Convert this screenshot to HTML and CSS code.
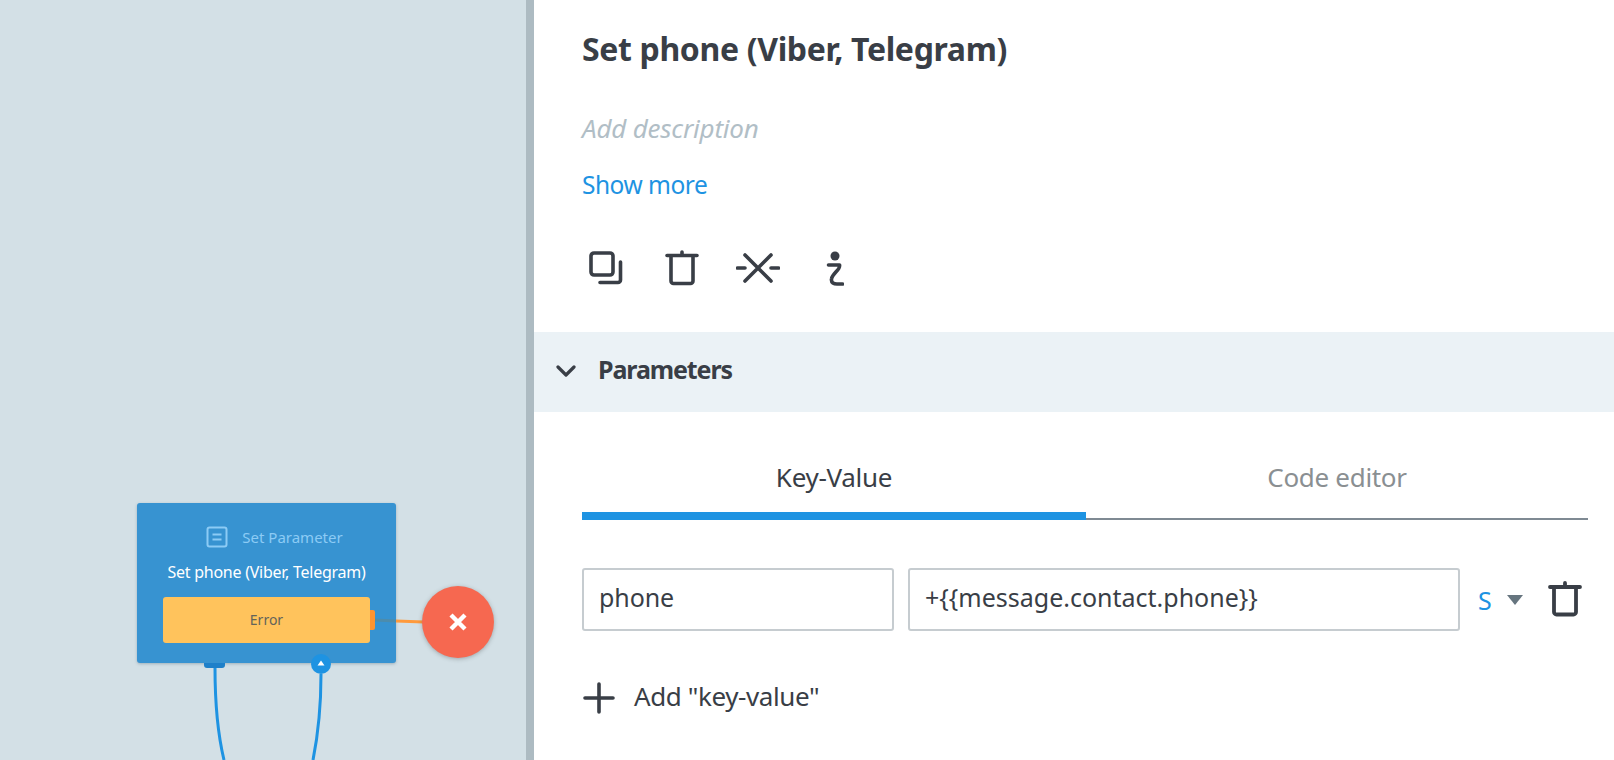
FILE: index.html
```html
<!DOCTYPE html>
<html lang="en">
<head>
<meta charset="utf-8">
<title>Set phone (Viber, Telegram)</title>
<link rel="stylesheet" href="styles.css">
</head>
<body>
<div class="app">
  <div class="canvas">
    <div class="node">
      <div class="node-type">
        <svg width="22" height="22" viewBox="0 0 22 22" fill="none" stroke="#8ccbf5" stroke-width="2"><rect x="1.500" y="1.500" width="19" height="19" rx="2"/><path d="M6.500 8.500h9M6.500 13.500h9"/></svg>
        <span>Set Parameter</span>
      </div>
      <div class="node-title">Set phone (Viber, Telegram)</div>
      <div class="node-error">Error<span class="port-orange"></span></div>
      <span class="port-square"></span>
      <span class="port-round"><svg width="8" height="6" viewBox="0 0 8 6"><path d="M4 0.500L7.500 5.500H.5z" fill="#fff"/></svg></span>
    </div>
    <svg class="wires" width="526" height="760" viewBox="0 0 526 760">
      <path d="M215 668C215 705 218 735 224 760" class="wire"/>
      <path d="M321 674C321 705 318 735 313 760" class="wire"/>
      <path d="M396 621L424 622" class="wire-orange"/>
      <path d="M375 620L396 621" class="wire-shade"/>
    </svg>
    <div class="fail-circle">
      <svg width="20" height="20" viewBox="0 0 20 20"><path d="M3 3L17 17M17 3L3 17" stroke="#fff" stroke-width="4.400"/></svg>
    </div>
  </div>
  <div class="splitter"></div>
  <main class="panel">
    <div class="head">
      <h1 class="title">Set phone (Viber, Telegram)</h1>
      <div class="desc">Add description</div>
      <a class="more">Show more</a>
      <div class="tools">
        <svg class="tool-copy" width="34" height="34" viewBox="0 0 34 34" fill="none" stroke="#393e46" stroke-width="3.600" stroke-linecap="round" stroke-linejoin="round"><rect x="2" y="2" width="22" height="22" rx="3"/><path d="M31.500 11V29a2.500 2.500 0 0 1-2.500 2.500H11"/></svg>
        <svg class="tool-trash" width="34" height="36" viewBox="0 0 34 36" fill="none" stroke="#393e46" stroke-width="3.600" stroke-linecap="round" stroke-linejoin="round"><path d="M2 5.500H32M17 2V5.500M6 6V31a2.500 2.500 0 0 0 2.500 2.500h17A2.500 2.500 0 0 0 28 31V6"/></svg>
        <svg class="tool-cut" width="44" height="32" viewBox="0 0 44 32" fill="none" stroke="#393e46" stroke-width="3.600" stroke-linecap="round"><path d="M9 3L35 29M35 3L9 29M1.500 16H9M35 16H42.500"/></svg>
        <svg class="tool-info" width="18" height="36" viewBox="0 0 18 36" fill="none" stroke="#393e46" stroke-width="3.600" stroke-linecap="round" stroke-linejoin="round"><circle cx="9" cy="6" r="4.500" fill="#393e46" stroke="none"/><path d="M2.500 15H13.500C15 19 6 24 5.500 29C5 33 8 34 11 34H16.500"/></svg>
      </div>
    </div>
    <div class="section">
      <svg class="section-chevron" width="20" height="12" viewBox="0 0 20 12" fill="none" stroke="#393e46" stroke-width="3.200" stroke-linecap="round" stroke-linejoin="round"><path d="M2 2L10 10L18 2"/></svg>
      <span class="section-label">Parameters</span>
    </div>
    <div class="body">
      <div class="tabs">
        <div class="tab tab-active">Key-Value</div>
        <div class="tab">Code editor</div>
      </div>
      <div class="row">
        <div class="field field-key">phone</div>
        <div class="field field-value">+{{message.contact.phone}}</div>
        <span class="type">S</span>
        <span class="caret"></span>
        <svg class="row-trash" width="34" height="36" viewBox="0 0 34 36" fill="none" stroke="#393e46" stroke-width="3.800" stroke-linecap="round" stroke-linejoin="round"><path d="M2 6H32M17 2V6M6 6V31a2.500 2.500 0 0 0 2.500 2.500h17A2.500 2.500 0 0 0 28 31V6"/></svg>
      </div>
      <div class="add">
        <svg class="add-icon" width="32" height="32" viewBox="0 0 32 32" fill="none" stroke="#393e46" stroke-width="3.600" stroke-linecap="round"><path d="M16 2V30M2 16H30"/></svg>
        <span class="add-label">Add "key-value"</span>
      </div>
    </div>
  </main>
</div>
</body>
</html>
```
FILE: styles.css
```css
* { box-sizing: border-box; }
html, body { margin: 0; height: 100%; overflow: hidden; }
body { font-family: "Noto Sans", "Open Sans", sans-serif; color: #393e46; background: #fff; }
.app { display: flex; width: 1614px; height: 760px; }

.canvas { position: relative; width: 526px; flex: none; background: #d3e0e6; overflow: hidden; }
.wires { position: absolute; left: 0; top: 0; }
.wire { fill: none; stroke: #1e93e2; stroke-width: 3; }
.wire-orange { fill: none; stroke: #ff9a3c; stroke-width: 3; }
.wire-shade { fill: none; stroke: #4c8cad; stroke-width: 3; }

.node { position: absolute; left: 137px; top: 503px; width: 259px; height: 160px; background: #3793d1; border-radius: 3px; box-shadow: 0 1px 3px rgba(60,90,110,.35); }
.node-type { display: flex; justify-content: center; align-items: center; gap: 14px; height: 22px; margin-top: 23px; padding-left: 16px; color: #8ccbf5; font-size: 15px; }
.node-title { margin-top: 13px; text-align: center; color: #fff; font-size: 16px; line-height: 22px; letter-spacing: -0.25px; white-space: nowrap; }
.node-error { position: relative; margin: 14px 26px 0; height: 46px; line-height: 45px; background: #ffc35c; border-radius: 3px; text-align: center; color: #63635a; font-size: 14px; }
.port-orange { position: absolute; left: 100%; top: 13px; width: 5px; height: 20px; background: #ff9430; border-radius: 0 2px 2px 0; }
.port-square { position: absolute; left: 67px; top: 100%; width: 21px; height: 5px; background: #1e80c9; border-radius: 0 0 3px 3px; }
.port-round { position: absolute; left: 174px; top: 151px; width: 20px; height: 20px; border-radius: 50%; background: #1e93e2; display: flex; align-items: center; justify-content: center; padding-bottom: 3px; }

.fail-circle { position: absolute; left: 422px; top: 586px; width: 72px; height: 72px; border-radius: 50%; background: #f66850; box-shadow: 0 1px 4px rgba(60,60,60,.35); display: flex; align-items: center; justify-content: center; }

.splitter { width: 8px; flex: none; background: #adbbc2; }

.panel { flex: 1; min-width: 0; display: flex; flex-direction: column; background: #fff; }
.head { height: 332px; padding: 27px 0 0 48px; display: flex; flex-direction: column; align-items: flex-start; }
.title { margin: 0; font-size: 32px; line-height: 44px; font-weight: 700; letter-spacing: -0.35px; }
.desc { margin-top: 40px; font-size: 26px; line-height: 34px; font-style: italic; color: #b1bec6; letter-spacing: -0.2px; }
.more { margin-top: 23px; font-size: 24.500px; line-height: 34px; color: #1e93e2; letter-spacing: -0.5px; }
.tools { display: flex; align-items: center; margin-top: 47px; padding-left: 7px; height: 38px; }
.tool-trash { margin-left: 42px; }
.tool-cut { margin-left: 37px; }
.tool-info { margin-left: 46px; }

.section { height: 80px; flex: none; background: #ebf2f6; display: flex; align-items: center; padding-left: 22px; gap: 22px; font-size: 25px; font-weight: 700; letter-spacing: -1.1px; }
.section-chevron { margin-bottom: 2px; }
.section-label { margin-bottom: 6px; }

.body { padding: 0 26px 0 48px; }
.tabs { display: flex; height: 108px; padding-top: 43px; border-bottom: 2px solid #7f8a93; }
.tab { flex: 1 1 50%; text-align: center; font-size: 26px; line-height: 44px; height: 65px; color: #8a8f92; letter-spacing: -0.3px; }
.tab-active { flex: 0 0 504px; color: #393e46; border-bottom: 8px solid #1e93e2; }

.row { display: flex; align-items: center; margin-top: 48px; }
.field { height: 63px; border: 2px solid #c6ccd0; border-radius: 3px; padding-left: 15px; font-size: 25px; line-height: 54px; letter-spacing: -0.1px; white-space: nowrap; }
.field-key { width: 312px; }
.field-value { width: 552px; margin-left: 14px; letter-spacing: 0; }
.type { margin-left: 18px; width: 29px; color: #1e93e2; font-size: 25px; }
.caret { width: 0; height: 0; border-left: 8px solid transparent; border-right: 8px solid transparent; border-top: 10px solid #66757f; }
.row-trash { margin-left: 25px; margin-bottom: 2px; }

.add { display: flex; align-items: flex-start; gap: 19px; margin-top: 49px; padding-left: 1px; font-size: 26px; letter-spacing: -0.4px; }
.add-icon { margin-top: 2px; }
.add-label { line-height: 32px; }
```
